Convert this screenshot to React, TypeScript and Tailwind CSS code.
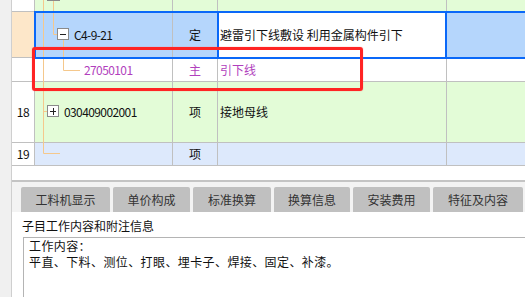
import React from 'react';

const font = { fontFamily: '"Noto Sans CJK SC", "Noto Sans", sans-serif' };

const tabs = [
  { label: '工料机显示', w: 'w-[89px]' },
  { label: '单价构成', w: 'w-[77px]' },
  { label: '标准换算', w: 'w-[78px]' },
  { label: '换算信息', w: 'w-[76px]' },
  { label: '安装费用', w: 'w-[77px]' },
  { label: '特征及内容', w: 'w-[90px]' },
];

function TreeLines() {
  const line = '#f5c88c';
  return (
    <svg className="absolute left-0 top-0 pointer-events-none" width="525" height="170" viewBox="0 0 525 170">
      <path d="M43.5 0 V153.5 H60" stroke={line} fill="none" />
      <path d="M43 111.5 H47" stroke={line} fill="none" />
      <path d="M53.5 1 V34.5 H57" stroke={line} fill="none" />
      <path d="M63.5 40 V70.5 H80" stroke={line} fill="none" />
      <rect x="47.5" y="-11.5" width="12" height="12" fill="#fff" stroke="#8a8a8a" />
      <rect x="57.5" y="28.5" width="11" height="11" fill="#fff" stroke="#8a8a8a" />
      <path d="M60 34.5 H66" stroke="#222" />
      <rect x="47.5" y="105.5" width="11" height="11" fill="#fff" stroke="#8a8a8a" />
      <path d="M50 111.5 H56 M53.5 108 V115" stroke="#222" />
    </svg>
  );
}

export default function App() {
  return (
    <div className="relative flex w-[525px] h-[297px] overflow-hidden bg-white text-[#111]" style={font}>
      <div className="w-[12px] shrink-0 bg-[#f0f0f0] border-r border-[#cfcfcf]" />
      <div className="flex-1 flex flex-col min-w-0">
        {/* grid */}
        <div className="flex flex-col text-[12px]">
          <div className="flex h-[12px] border-b border-[#c0c0c0]">
            <div className="w-[23px] shrink-0 bg-white border-r border-[#c0c0c0]" />
            <div className="w-[138px] shrink-0 bg-[#e3fcd7] border-r border-[#c0c0c0]" />
            <div className="w-[45px] shrink-0 bg-[#e3fcd7] border-r border-[#c0c0c0]" />
            <div className="w-[229px] shrink-0 bg-[#e3fcd7] border-r border-[#c0c0c0]" />
            <div className="flex-1 bg-[#e3fcd7]" />
          </div>
          <div className="flex h-[46px] border-b border-[#c0c0c0]">
            <div className="w-[23px] shrink-0 bg-[#fde7c9] border-r border-[#c0c0c0]" />
            <div className="w-[138px] shrink-0 bg-[#b5d6fc] border-r border-[#c0c0c0] flex items-center pl-[39px] tracking-[-0.6px]">C4-9-21</div>
            <div className="w-[45px] shrink-0 bg-[#b5d6fc] border-r border-[#c0c0c0] flex items-center justify-center">定</div>
            <div className="w-[229px] shrink-0 bg-white border-r border-[#c0c0c0] flex items-center pl-[2px] whitespace-nowrap">避雷引下线敷设 利用金属构件引下</div>
            <div className="flex-1 bg-[#b5d6fc]" />
          </div>
          <div className="flex h-[24px] border-b border-[#c0c0c0] text-[#b13fbd]">
            <div className="w-[23px] shrink-0 bg-white border-r border-[#c0c0c0]" />
            <div className="w-[138px] shrink-0 bg-white border-r border-[#c0c0c0] flex items-center pl-[49px] tracking-[-0.6px]">27050101</div>
            <div className="w-[45px] shrink-0 bg-white border-r border-[#c0c0c0] flex items-center justify-center">主</div>
            <div className="w-[229px] shrink-0 bg-white border-r border-[#c0c0c0] flex items-center pl-[2px]">引下线</div>
            <div className="flex-1 bg-white" />
          </div>
          <div className="flex h-[61px] border-b border-[#c0c0c0]">
            <div className="w-[23px] shrink-0 bg-white border-r border-[#c0c0c0] flex items-center justify-center tracking-[-0.4px]">18</div>
            <div className="w-[138px] shrink-0 bg-[#e3fcd7] border-r border-[#c0c0c0] flex items-center pl-[29px] tracking-[-0.6px]">030409002001</div>
            <div className="w-[45px] shrink-0 bg-[#e3fcd7] border-r border-[#c0c0c0] flex items-center justify-center">项</div>
            <div className="w-[229px] shrink-0 bg-[#e3fcd7] border-r border-[#c0c0c0] flex items-center pl-[2px]">接地母线</div>
            <div className="flex-1 bg-[#e3fcd7]" />
          </div>
          <div className="flex h-[23px] border-b border-[#c0c0c0]">
            <div className="w-[23px] shrink-0 bg-white border-r border-[#c0c0c0] flex items-center justify-center tracking-[-0.4px]">19</div>
            <div className="w-[138px] shrink-0 bg-[#dde9fc] border-r border-[#c0c0c0]" />
            <div className="w-[45px] shrink-0 bg-[#dde9fc] border-r border-[#c0c0c0] flex items-center justify-center">项</div>
            <div className="w-[229px] shrink-0 bg-[#dde9fc] border-r border-[#c0c0c0]" />
            <div className="flex-1 bg-[#dde9fc]" />
          </div>
        </div>

        <div className="h-[14px] shrink-0" />
        <div className="h-[2px] shrink-0 bg-[#c4c4c4]" />

        {/* tabs */}
        <div className="flex gap-[3px] bg-[#f3f3f3] pt-[5px] pl-[9px]">
          {tabs.map((t) => (
            <div
              key={t.label}
              className={`${t.w} h-[25px] shrink-0 rounded-t-[2px] bg-[#c0c0c0] text-[#333] text-[12px] flex items-center justify-center`}
            >
              {t.label}
            </div>
          ))}
        </div>

        {/* panel */}
        <div className="flex-1 bg-white pt-[6px]">
          <div className="pl-[10px] text-[12px] leading-[16px] text-[#111]">子目工作内容和附注信息</div>
          <div className="mt-[3px] ml-[11px] -mr-[4px] h-[80px] border border-[#b4b4b4] pl-[5px] text-[12px] leading-[16px] tracking-[0.4px] text-[#111]">
            <div>工作内容：</div>
            <div className="whitespace-nowrap">平直、下料、测位、打眼、埋卡子、焊接、固定、补漆。</div>
          </div>
        </div>
      </div>

      <TreeLines />

      {/* selection outline */}
      <div className="absolute left-[34px] top-[11px] -right-[4px] h-[48px] border-2 border-[#0a68f8] pointer-events-none" />
      <div className="absolute left-[217px] top-[11px] w-[2px] h-[48px] bg-[#0a68f8] pointer-events-none" />
      <div className="absolute left-[445px] top-[11px] w-[2px] h-[48px] bg-[#0a68f8] pointer-events-none" />

      {/* annotation */}
      <div className="absolute left-[32px] top-[47px] w-[331px] h-[44px] border-[3px] border-[#ff2424] rounded-[3px] shadow-[0_0_1px_#ff6060] pointer-events-none" />
    </div>
  );
}
